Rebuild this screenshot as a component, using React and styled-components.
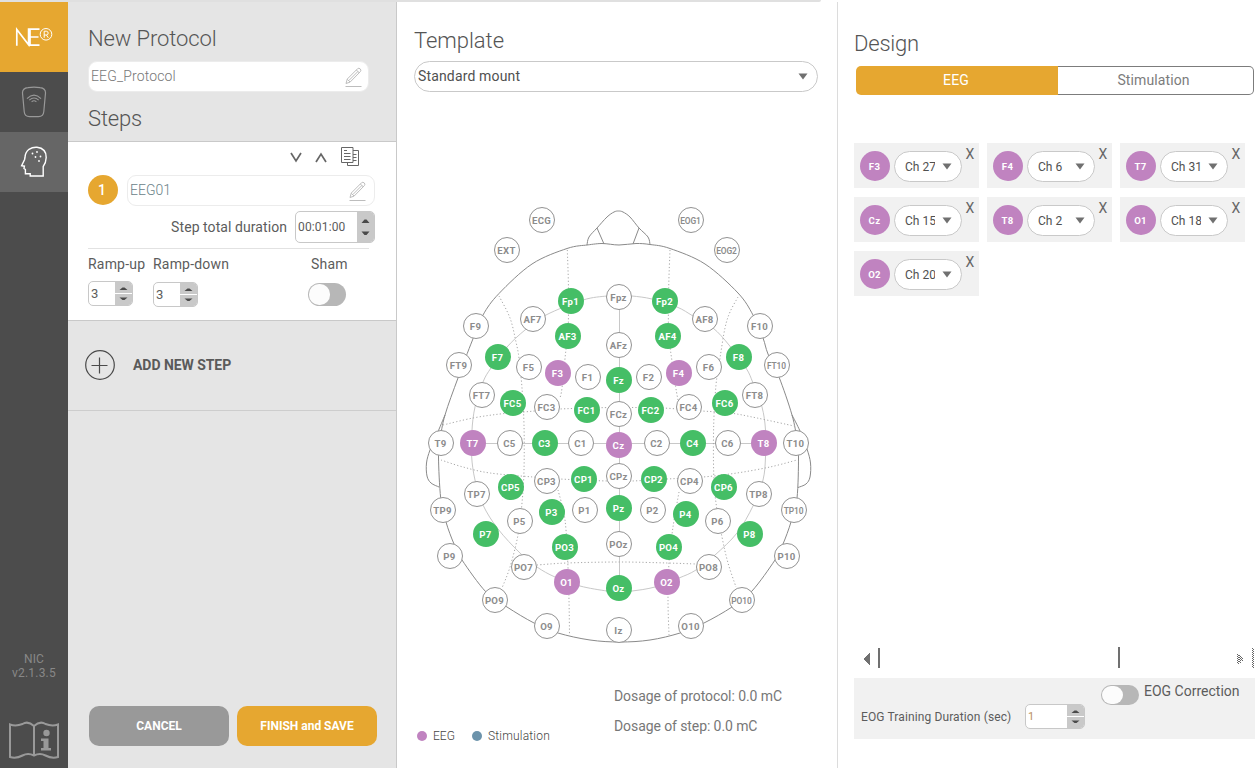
import React from "react";
import styled, { createGlobalStyle, css } from "styled-components";

const Global = createGlobalStyle`
  * { box-sizing: border-box; }
  body { margin: 0; background: #fff; font-family: Roboto, "Liberation Sans", sans-serif; color: #595959; }
  button { font-family: inherit; border: 0; margin: 0; padding: 0; background: none; color: inherit; }
`;

const ACCENT = "#e6a730";
const PURPLE = "#c083c0";
const GREEN = "#45be66";

const Screen = styled.div`
  width: 1260px;
  height: 768px;
  display: flex;
  flex-direction: column;
  overflow: hidden;
`;
const TopStrip = styled.div`
  height: 2px;
  width: 821px;
  flex: none;
  background: #e0e0e0;
  border-bottom-right-radius: 3px;
`;
const Columns = styled.div`
  display: flex;
  height: 766px;
`;

/* Navigation rail */
const Rail = styled.nav`
  width: 68px;
  background: #4c4c4c;
  display: flex;
  flex-direction: column;
`;
const RailCell = styled.div`
  height: ${(p) => p.$h || 60}px;
  background: ${(p) => p.$bg || "transparent"};
  display: flex;
  align-items: center;
  justify-content: center;
`;
const Version = styled.div`
  margin-top: auto;
  text-align: center;
  font-size: 12px;
  line-height: 14px;
  letter-spacing: 0.2px;
  color: #888;
`;
const GuideIcon = styled.svg`
  display: block;
  margin: 40px auto 8px;
`;

/* Protocol panel */
const Panel = styled.section`
  width: 329px;
  background: #e5e5e5;
  border-right: 1px solid #c9c9c9;
  display: flex;
  flex-direction: column;
`;
const Title = styled.h2`
  margin: 0;
  font-weight: 300;
  font-size: 22px;
  line-height: 28px;
  letter-spacing: ${(p) => p.$ls || 0}px;
  color: #555;
`;
const ProtocolHead = styled.div`
  height: 139px;
  padding: 23px 0 0 20px;
`;
const NameField = styled.div`
  width: ${(p) => p.$w}px;
  height: 31px;
  border: 1px solid #ececec;
  border-radius: 9px;
  background: #fff;
  display: flex;
  align-items: center;
  justify-content: space-between;
  padding: 0 ${(p) => p.$pr || 5}px 0 2px;
  font-size: 14px;
  font-weight: 300;
  letter-spacing: ${(p) => p.$ls || 0}px;
  color: ${(p) => p.$color || "#777"};
`;
const HeadField = styled(NameField)`
  margin: 8px 0 13px;
`;
const FieldText = styled.span`
  padding-bottom: 2px;
`;
const StepCard = styled.div`
  height: 180px;
  background: #fff;
  border-top: 1px solid #c9c9c9;
  border-bottom: 1px solid #c9c9c9;
  padding: 5px 0 0 20px;
`;
const StepTools = styled.div`
  display: flex;
  align-items: center;
  height: 20px;
  padding-left: 202px;
`;
const StepName = styled.div`
  display: flex;
  gap: 9px;
  margin-top: 8px;
`;
const StepNumber = styled.div`
  width: 30px;
  height: 30px;
  border-radius: 50%;
  background: ${ACCENT};
  color: #fff;
  font-size: 14px;
  font-weight: 500;
  display: flex;
  align-items: center;
  justify-content: center;
  padding-right: 2px;
`;
const DurationRow = styled.div`
  display: flex;
  align-items: center;
  justify-content: flex-end;
  gap: 8px;
  margin-top: 5px;
  padding-right: 21px;
`;
const Label = styled.span`
  font-size: ${(p) => p.$size || 14}px;
  line-height: 20px;
  letter-spacing: ${(p) => p.$ls ?? 0.2}px;
  color: ${(p) => p.$color || "#5c5c5c"};
  padding-left: ${(p) => p.$pl || 0}px;
  white-space: nowrap;
`;
const SpinBox = styled.div`
  width: ${(p) => p.$w || 45}px;
  height: ${(p) => p.$h || 25}px;
  border: 1px solid #c8c8c8;
  border-radius: 5px;
  background: #fff;
  display: flex;
  overflow: hidden;
  font-size: ${(p) => p.$size || 13}px;
  line-height: ${(p) => (p.$h || 25) - 2}px;
  letter-spacing: ${(p) => p.$ls || 0}px;
  color: ${(p) => p.$color || "#5c5c5c"};
`;
const SpinValue = styled.div`
  flex: 1;
  padding-left: 2px;
`;
const SpinButtons = styled.div`
  width: 17px;
  background: #c9c9c9;
  svg { display: block; }
`;
const Rule = styled.div`
  height: 1px;
  width: 281px;
  margin-top: 5px;
  background: #e2e2e2;
`;
const RampRow = styled.div`
  display: grid;
  grid-template-columns: 65px 155px 1fr;
  margin-top: 5px;
  align-items: start;
`;
const RampCell = styled.div`
  display: flex;
  flex-direction: column;
  gap: ${(p) => p.$gap}px;
`;
const Toggle = styled.div`
  width: 38px;
  height: ${(p) => p.$h || 23}px;
  border-radius: 12px;
  background: #b7b7b7;
  padding: 1px;
  margin-top: ${(p) => p.$mt || 0}px;
  &::before {
    content: "";
    display: block;
    width: 21px;
    height: 100%;
    border-radius: 10px;
    background: #fcfcfc;
  }
`;
const AddStep = styled.div`
  height: 90px;
  border-bottom: 1px solid #cdcdcd;
  display: flex;
  align-items: center;
  gap: 18px;
  padding: 0 0 2px 17px;
  font-size: 14px;
  font-weight: 700;
  letter-spacing: -0.05px;
  color: #5a5a5a;
`;
const Actions = styled.div`
  display: flex;
  gap: 8px;
  margin: auto 0 22px 21px;
`;
const ActionButton = styled.button`
  width: 140px;
  height: 40px;
  border-radius: 10px;
  background: ${(p) => (p.$primary ? ACCENT : "#999")};
  color: #fff;
  font-size: 12px;
  font-weight: 700;
`;

/* Template panel */
const Template = styled.section`
  width: 441px;
  border-right: 1px solid #dcdcdc;
  padding-top: 25px;
`;
const TemplateHead = styled.div`
  padding-left: 17px;
`;
const Select = styled.div`
  width: ${(p) => p.$w}px;
  height: 31px;
  border: 1px solid #c9c9c9;
  border-radius: 16px;
  background: #fff;
  display: flex;
  align-items: center;
  justify-content: space-between;
  padding: 0 ${(p) => p.$pr || 9}px 0 ${(p) => p.$pl || 3}px;
  font-size: ${(p) => p.$size || 14}px;
  letter-spacing: ${(p) => p.$ls || 0}px;
  color: #505050;
`;
const MountSelect = styled(Select)`
  margin-top: 6px;
`;
const SelectText = styled.span`
  width: 30px;
  overflow: hidden;
  white-space: nowrap;
`;
const HeadMap = styled.div`
  position: relative;
  width: 440px;
  height: 470px;
  margin-top: 98px;
`;
const HeadDrawing = styled.svg`
  display: block;
`;
const kinds = {
  free: css`border: 1px solid #929292; background: #fff; color: #8c8c8c;`,
  on: css`background: ${GREEN}; color: #fff;`,
  eeg: css`background: ${PURPLE}; color: #fff;`,
};
const Electrode = styled.div`
  position: absolute;
  left: ${(p) => p.$x - 397 - 13}px;
  top: ${(p) => p.$y - 190 - 13}px;
  width: 26px;
  height: 26px;
  border-radius: 50%;
  display: flex;
  align-items: center;
  justify-content: center;
  font-size: ${(p) => (p.$small ? 8.4 : 9.6)}px;
  font-weight: ${(p) => (p.$small ? 600 : 700)};
  letter-spacing: ${(p) => (p.$small ? -0.1 : 0.3)}px;
  padding: 1px 1px 0 0;
  ${(p) => kinds[p.$kind]}
`;
const TemplateFoot = styled.div`
  display: flex;
  height: 90px;
  padding: 16px 0 0 20px;
`;
const Legend = styled.div`
  display: flex;
  align-items: center;
  height: 20px;
  width: 197px;
  margin-top: 50px;
  font-size: 12px;
  font-weight: 300;
  color: #444;
`;
const Dot = styled.i`
  width: 10px;
  height: 10px;
  border-radius: 50%;
  background: ${(p) => p.$c};
  margin-right: 6px;
`;
const LegendText = styled.span`
  margin-right: 17px;
  letter-spacing: ${(p) => p.$ls || 0}px;
`;
const Dosage = styled.div`
  display: flex;
  flex-direction: column;
  gap: 10px;
  padding-top: 10px;
`;

/* Design panel */
const Design = styled.section`
  width: 422px;
  padding: 28px 0 0 16px;
`;
const Tabs = styled.div`
  display: flex;
  width: 398px;
  height: 29px;
  margin: 8px 0 48px 2px;
`;
const Tab = styled.div`
  width: ${(p) => (p.$active ? 202 : 196)}px;
  display: flex;
  align-items: center;
  justify-content: center;
  font-size: 14px;
  letter-spacing: 0.1px;
  padding-bottom: 1px;
  ${(p) =>
    p.$active
      ? css`background: ${ACCENT}; color: #fff; border-radius: 5px 0 0 5px; padding-right: 2px;`
      : css`border: 1px solid #7c7c7c; border-left: 0; border-radius: 0 5px 5px 0; color: #7c7c7c; padding-right: 4px;`}
`;
const Channels = styled.div`
  display: grid;
  grid-template-columns: repeat(3, 125px);
  grid-auto-rows: 45px;
  gap: 9px 8px;
  height: 504px;
  align-content: start;
`;
const Channel = styled.div`
  background: #f1f1f1;
  display: flex;
  padding: 8px 0 0 6px;
`;
const ChannelBadge = styled.div`
  width: 30px;
  height: 30px;
  border-radius: 50%;
  background: ${PURPLE};
  color: #fff;
  font-size: 9.6px;
  font-weight: 700;
  letter-spacing: 0.3px;
  display: flex;
  align-items: center;
  justify-content: center;
  padding: 1px 1px 0 0;
  margin-right: 4px;
`;
const Remove = styled.button`
  width: 9px;
  height: 14px;
  margin: -4px 0 0 3.5px;
  font-size: 14px;
  line-height: 14px;
  color: #666;
`;
const ScrollRow = styled.svg`
  display: block;
  height: 22px;
`;
const EogPanel = styled.div`
  width: 401px;
  height: 61px;
  margin-top: 9px;
  background: #f1f1f1;
  display: flex;
`;
const Training = styled.div`
  display: flex;
  align-items: center;
  justify-content: space-between;
  width: 247px;
  padding: 16px 16px 0 7px;
`;
const Correction = styled.div`
  display: flex;
  gap: 5px;
  padding-top: 3px;
`;

const Pencil = () => (
  <svg width="18" height="20" viewBox="0 0 18 20" fill="none" stroke="#bdbdbd" strokeWidth="1">
    <path d="M1 16.5 2.3 12 12.6 1.7q1.2-1 2.6.2t.2 2.7L5.1 15.1 1 16.5zM2.3 12.3 5 15M11.4 3l3 3M3.8 13.6 13 4.4" />
    <path d="M.5 19.5h16" />
  </svg>
);
const Caret = () => (
  <svg width="10" height="7" viewBox="0 0 10 7"><path d="M.5.5h9L5 6.5z" fill="#707070" /></svg>
);
const Spin = ({ value, split, ...rest }) => {
  const h = rest.$h || 25;
  const m = (h - 2) / 2;
  return (
    <SpinBox {...rest}>
      <SpinValue>{value}</SpinValue>
      <SpinButtons>
        <svg width="17" height={h - 2} viewBox={`0 0 17 ${h - 2}`}>
          {split && <path d={`M0 ${m}h17`} stroke="#fff" />}
          <path
            d={split ? `M4.5 ${m - 3.5}h8l-3-2.5h-2zM4.5 ${m + 4}h8l-3 2.5h-2z` : `M4.5 ${m - 4}h8l-3-3.5h-2zM4.5 ${m + 4.5}h8l-3 3.5h-2z`}
            fill="#4a4a4a"
          />
        </svg>
      </SpinButtons>
    </SpinBox>
  );
};

// Catmull-Rom spline through a flat [x, y, x, y, ...] list
const curve = (flat) => {
  const p = [];
  for (let i = 0; i < flat.length; i += 2) p.push([flat[i], flat[i + 1]]);
  let d = `M${p[0]}`;
  for (let i = 0; i < p.length - 1; i++) {
    const a = p[i - 1] || p[i], b = p[i], c = p[i + 1], e = p[i + 2] || c;
    d += `C${b[0] + (c[0] - a[0]) / 6} ${b[1] + (c[1] - a[1]) / 6} ${c[0] - (e[0] - b[0]) / 6} ${c[1] - (e[1] - b[1]) / 6} ${c[0]} ${c[1]}`;
  }
  return d;
};

const outline = [
  [587, 245, 567, 248.5, 532, 264, 499, 293.5, 483, 315, 472.5, 340, 458, 378, 445, 415, 440, 440, 438.5, 457, 440.7, 498, 446, 522, 454, 544, 462, 560, 486, 592, 507, 607, 534, 623, 558, 633, 590, 640, 620, 642, 650, 640, 680, 633, 704, 623, 732, 607, 752, 591, 775, 560, 783, 544, 791, 522, 797, 498, 798.5, 457, 797, 440, 792, 415, 779, 377, 768, 354, 763, 338, 753, 315, 738, 293, 705, 264, 670, 248.5, 650, 244.5, 636, 243.5, 619, 245, 602, 243.5, 587, 245],
  [445, 415, 437, 434, 430, 450, 426.5, 463, 427, 476, 431, 483, 439, 487],
  [792, 415, 800, 431, 807, 449, 810.5, 463, 810, 477, 806, 484, 798, 487.5],
  [587, 245, 589, 237, 597, 228, 607, 217, 614, 212, 618.5, 211, 623, 212, 630, 217, 639, 228, 648, 237, 650, 244.5],
];
const inner = [473, 443, 471.7, 457, 475, 480, 483, 505, 498, 529, 520, 553, 537, 567, 555, 577, 580, 586, 607, 591, 619, 591.5, 632, 591, 655, 587, 679, 578, 696, 570, 715, 555, 737, 533, 753, 506, 763, 480, 765.5, 457, 765.5, 430, 762, 407, 753, 383, 746, 368, 729, 345, 713, 328, 693, 316, 677, 307, 652, 299, 632, 296, 619, 295.5, 607, 296, 583, 300, 546, 315, 525, 330, 507, 347, 491, 368, 483, 382, 475, 407, 472, 430, 473, 443];
const dotted = [
  [567.3, 250, 568.5, 290, 568, 336, 565.7, 352, 562, 388, 560, 398],
  [558, 490, 565, 520, 568, 567, 569, 600, 569.5, 634],
  [499, 296, 510, 318, 516, 342, 519, 358, 522, 388, 524, 425, 524, 470, 522, 503, 518, 535, 510, 567, 502, 588],
  [670, 250, 668.7, 288, 668.5, 336, 670.7, 352, 675.7, 387, 678, 400],
  [679, 492, 673, 527, 669, 563, 668, 600, 669, 635],
  [738, 297, 730, 312, 725, 328, 720, 358, 716, 385, 713.7, 425, 713.7, 473, 716, 503, 722, 537, 728, 563, 736, 587],
  [443, 425, 473, 418, 500, 414, 527, 411.7, 560, 409, 610, 407.5, 631, 407.5, 663, 408, 702, 411, 730, 413, 757, 418, 794, 426],
  [441, 460, 463, 467, 490, 473, 533, 477, 560, 479, 607, 481, 632, 481, 667, 479, 703, 477, 737, 473, 770, 467, 797, 460],
  [537, 565, 567, 563, 620, 562, 667, 563, 696, 564],
];

const electrodes = {
  free: [
    ["ECG", 542, 220], ["EXT", 507, 250], ["EOG1", 691, 220, 1], ["EOG2", 727, 250, 1],
    ["Fpz", 619, 297], ["AF7", 533, 319], ["AF8", 705, 319], ["F9", 476, 326], ["F10", 760, 326],
    ["AFz", 619, 345], ["FT9", 459, 365], ["FT10", 777, 365, 1], ["F5", 529, 367], ["F6", 709, 367],
    ["F1", 588, 377], ["F2", 649, 377], ["FT7", 482, 395], ["FT8", 755, 395], ["FC3", 547, 407],
    ["FC4", 689, 407], ["FCz", 619, 414], ["T9", 441, 443], ["C5", 510, 443], ["C1", 581, 443],
    ["C2", 657, 443], ["C6", 728, 443], ["T10", 796, 443], ["CP3", 547, 481], ["CPz", 619, 476],
    ["CP4", 690, 481], ["TP7", 477, 494], ["TP8", 759, 494], ["TP9", 443, 510], ["TP10", 794, 510, 1],
    ["P1", 585, 510], ["P2", 653, 510], ["P5", 520, 521], ["P6", 718, 521], ["POz", 619, 544],
    ["P9", 450, 556], ["P10", 787, 556], ["PO7", 524, 567], ["PO8", 709, 567], ["PO9", 495, 600],
    ["PO10", 742, 600, 1], ["O9", 547, 626], ["O10", 691, 626], ["Iz", 619, 630],
  ],
  on: [
    ["Fp1", 571, 301], ["Fp2", 665, 301], ["AF3", 568, 336], ["AF4", 668, 336], ["F7", 498, 357],
    ["F8", 739, 357], ["Fz", 619, 380], ["FC5", 513, 403], ["FC6", 725, 403], ["FC1", 587, 410],
    ["FC2", 651, 410], ["C3", 545, 443], ["C4", 693, 443], ["CP1", 584, 479], ["CP2", 654, 479],
    ["CP5", 511, 487], ["CP6", 724, 487], ["P3", 552, 512], ["P4", 686, 514], ["Pz", 619, 508],
    ["P7", 486, 534], ["P8", 750, 534], ["PO3", 565, 547], ["PO4", 669, 547], ["Oz", 619, 588],
  ],
  eeg: [
    ["F3", 558, 373], ["F4", 679, 373], ["T7", 473, 443], ["Cz", 619, 445], ["T8", 764, 443],
    ["O1", 567, 582], ["O2", 667, 582],
  ],
};

const channels = [["F3", "Ch 27"], ["F4", "Ch 6"], ["T7", "Ch 31"], ["Cz", "Ch 15"], ["T8", "Ch 2"], ["O1", "Ch 18"], ["O2", "Ch 20"]];

const Logo = () => (
  <svg width="40" height="24" viewBox="0 0 40 24" fill="none" stroke="#fff">
    <path d="M2.8 20.8V4.5L14.6 19.8V3.3M25.5 4.1H16v16h9.5M16 12h8.5" strokeWidth="1.7" />
    <circle cx="32" cy="9.3" r="5.8" strokeWidth="1" />
    <path d="M30.2 12.8V6.2h2.1q1.9.2 1.9 1.9t-1.9 1.9H30.2M32.4 10 34.3 12.8" strokeWidth="1" />
  </svg>
);
const DeviceIcon = () => (
  <svg width="26" height="32" viewBox="0 0 26 32" fill="none" stroke="#999" strokeWidth="1.2">
    <path d="M7 1.6Q13 .6 19 1.6 24.7 2.2 24.5 7L22.8 25.5Q22.4 30.6 17.5 30.6H8.5Q3.6 30.6 3.2 25.5L1.5 7Q1.3 2.2 7 1.6z" />
    <path d="M6 12.6Q13 5.8 20 12.6M8.3 14.2Q13 9.8 17.7 14.2M10.6 15.8Q13 13.8 15.4 15.8" strokeWidth="1.1" />
  </svg>
);
const BrainIcon = () => (
  <svg width="28" height="34" viewBox="0 0 28 34" fill="none" stroke="#fff" strokeWidth="1.4">
    <path d="M5 12.5Q5.3 7 9 4.3 12.5 2 17 2.3 26.3 3.4 26.2 12.5 26 18 23.2 21.5V31H10.2V28.8H5.4V24.5L4 23.4 4.4 21.2 1.6 20.8 4.6 14.5z" />
    <g fill="#fff" stroke="none">
      <circle cx="12.5" cy="8.5" r=".9" /><circle cx="17" cy="7" r=".9" /><circle cx="15.5" cy="12" r=".9" />
      <circle cx="20.5" cy="11.5" r=".9" /><circle cx="19" cy="16" r=".9" />
    </g>
  </svg>
);

export default function App() {
  return (
    <Screen>
      <Global />
      <TopStrip />
      <Columns>
        <Rail>
          <RailCell $h={70} $bg={ACCENT}><Logo /></RailCell>
          <RailCell><DeviceIcon /></RailCell>
          <RailCell $bg="#666"><BrainIcon /></RailCell>
          <Version>NIC<br />v2.1.3.5</Version>
          <GuideIcon width="52" height="40" viewBox="0 0 52 40" fill="none" stroke="#999" strokeWidth="2">
            <path d="M26 6Q20 .5 14.5 4 8 6.5 2 4.5V37Q8 39 14.5 35.5 20 32.5 26 35.5 32 32.5 37.5 35.5 44 39 50 37V4.5Q44 6.5 37.5 4 32 .5 26 6zM26 6V35" />
            <path d="M33 18.5h7.5v9.5h2.5v2.5H33V28h2.5v-7H33z" fill="#999" stroke="none" />
            <circle cx="38.5" cy="13" r="3.2" fill="#999" stroke="none" />
          </GuideIcon>
        </Rail>

        <Panel>
          <ProtocolHead>
            <Title $ls={-0.1}>New Protocol</Title>
            <HeadField $w={281} $ls={0.15}><FieldText>EEG_Protocol</FieldText><Pencil /></HeadField>
            <Title $ls={-0.15}>Steps</Title>
          </ProtocolHead>
          <StepCard>
            <StepTools>
              <svg width="72" height="20" viewBox="0 0 72 20" fill="none" stroke="#666">
                <path d="M1 6 6 14 11 6M26 15 31 7 36 15" strokeWidth="1.7" />
                <path d="M51.5.5h11.5v15H51.5zM63 3.5h5.5v15H57.5v-3M54 3.5h3M54 6.5h6.5M54 9.5h6.5M54 12.5h6.5M63 7.5h3.5M63 10.5h3.5M63 13.5h3.5" />
              </svg>
            </StepTools>
            <StepName>
              <StepNumber>1</StepNumber>
              <NameField $w={248} $pr={7} $color="#6b8288"><FieldText>EEG01</FieldText><Pencil /></NameField>
            </StepName>
            <DurationRow>
              <Label $ls={0.07}>Step total duration</Label>
              <Spin value="00:01:00" $w={80} $h={32} $size={12} $ls={0.15} />
            </DurationRow>
            <Rule />
            <RampRow>
              <RampCell $gap={7}><Label>Ramp-up</Label><Spin split value="3" /></RampCell>
              <RampCell $gap={8}><Label>Ramp-down</Label><Spin split value="3" /></RampCell>
              <RampCell $gap={9}><Label $pl={3}>Sham</Label><Toggle /></RampCell>
            </RampRow>
          </StepCard>
          <AddStep>
            <svg width="30" height="30" viewBox="0 0 30 30" fill="none" stroke="#4a4a4a" strokeWidth="1.2">
              <circle cx="15" cy="15" r="14.3" /><path d="M14.5 7.5v16M6.5 15.5h16" />
            </svg>
            ADD NEW STEP
          </AddStep>
          <Actions>
            <ActionButton>CANCEL</ActionButton>
            <ActionButton $primary>FINISH and SAVE</ActionButton>
          </Actions>
        </Panel>

        <Template>
          <TemplateHead>
            <Title $ls={-0.05}>Template</Title>
            <MountSelect $w={404} $ls={0.15}><FieldText>Standard mount</FieldText><Caret /></MountSelect>
          </TemplateHead>
          <HeadMap>
            <HeadDrawing width="440" height="470" viewBox="397 190 440 470" fill="none">
              <g stroke="#8a8a8a">
                {outline.map((o, i) => <path key={i} d={curve(o)} />)}
                <path d="M597 228 604 244M639 228 633 244" />
              </g>
              <path d={curve(inner) + "M473 443.5H764M619.5 297V588"} stroke="#c8c8c8" />
              <g stroke="#a8a8a8" strokeDasharray="1.2 2.2">
                {dotted.map((o, i) => <path key={i} d={curve(o)} />)}
              </g>
            </HeadDrawing>
            {Object.entries(electrodes).map(([kind, list]) =>
              list.map(([name, x, y, small]) => (
                <Electrode key={name} $kind={kind} $x={x} $y={y} $small={small}>{name}</Electrode>
              ))
            )}
          </HeadMap>
          <TemplateFoot>
            <Legend>
              <Dot $c={PURPLE} /><LegendText>EEG</LegendText>
              <Dot $c="#6c93ab" /><LegendText $ls={0.2}>Stimulation</LegendText>
            </Legend>
            <Dosage>
              <Label $color="#777" $ls={-0.07}>Dosage of protocol: 0.0 mC</Label>
              <Label $color="#777" $ls={-0.09}>Dosage of step: 0.0 mC</Label>
            </Dosage>
          </TemplateFoot>
        </Template>

        <Design>
          <Title $ls={-0.2}>Design</Title>
          <Tabs><Tab $active>EEG</Tab><Tab>Stimulation</Tab></Tabs>
          <Channels>
            {channels.map(([name, ch]) => (
              <Channel key={name}>
                <ChannelBadge>{name}</ChannelBadge>
                <Select $w={68} $pl={10} $size={12}><SelectText>{ch}</SelectText><Caret /></Select>
                <Remove>X</Remove>
              </Channel>
            ))}
          </Channels>
          <ScrollRow width="401" height="22" viewBox="854 647 401 22" shapeRendering="crispEdges">
            <path d="M863 659 870 653V665zM878 648h2v20h-2zM1118 647h2v21h-2z" fill="#707070" />
            <path d="M1237.5 654V664M1239.5 655V663M1241.5 657V661M1252.5 648V668" stroke="#666" strokeDasharray="1 1" />
            <path d="M1238.5 655V664M1240.5 656V663M1242.5 658V661M1253.5 649V668" stroke="#666" strokeDasharray="1 1" />
          </ScrollRow>
          <EogPanel>
            <Training>
              <Label $size={12} $ls={0.12}>EOG Training Duration (sec)</Label>
              <Spin split value="1" $w={60} $size={11} $color="#b98f5e" />
            </Training>
            <Correction>
              <Toggle $h={20} $mt={4} />
              <Label $ls={0}>EOG Correction</Label>
            </Correction>
          </EogPanel>
        </Design>
      </Columns>
    </Screen>
  );
}
